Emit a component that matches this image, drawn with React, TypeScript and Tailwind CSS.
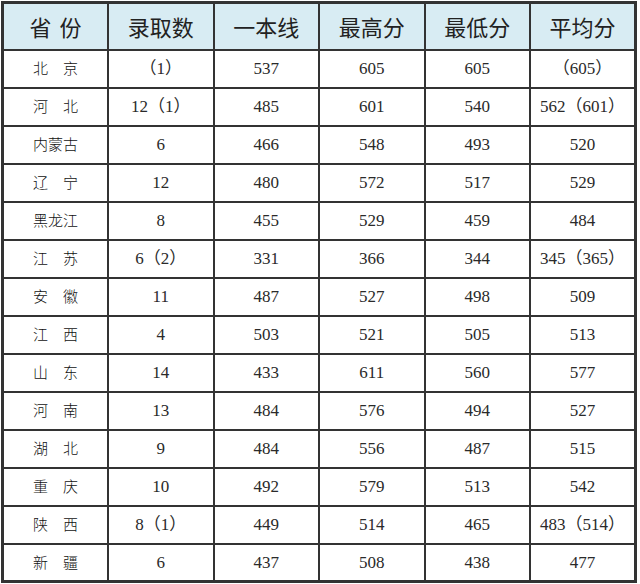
import React from "react";

const rows: [string, string, string, string, string, string][] = [
  ["北　京", "（1）", "537", "605", "605", "（605）"],
  ["河　北", "12（1）", "485", "601", "540", "562（601）"],
  ["内蒙古", "6", "466", "548", "493", "520"],
  ["辽　宁", "12", "480", "572", "517", "529"],
  ["黑龙江", "8", "455", "529", "459", "484"],
  ["江　苏", "6（2）", "331", "366", "344", "345（365）"],
  ["安　徽", "11", "487", "527", "498", "509"],
  ["江　西", "4", "503", "521", "505", "513"],
  ["山　东", "14", "433", "611", "560", "577"],
  ["河　南", "13", "484", "576", "494", "527"],
  ["湖　北", "9", "484", "556", "487", "515"],
  ["重　庆", "10", "492", "579", "513", "542"],
  ["陕　西", "8（1）", "449", "514", "465", "483（514）"],
  ["新　疆", "6", "437", "508", "438", "477"],
];

const headers = ["录取数", "一本线", "最高分", "最低分", "平均分"];

const thCls =
  "border-2 border-[#333] p-0 text-center align-middle text-[22px] font-normal text-[#222] font-['Noto_Sans_CJK_SC',sans-serif]";

export default function App() {
  return (
    <div className="w-[640px] h-[584px] bg-white pt-px pl-px">
      <table className="table-fixed border-collapse w-[636px] border-[3px] border-[#333]">
        <thead>
          <tr className="h-[47px] bg-[#d8ecf3]">
            <th className={thCls}>
              <span>省</span>
              <span className="ml-2">份</span>
            </th>
            {headers.map((h) => (
              <th key={h} className={thCls}>
                {h}
              </th>
            ))}
          </tr>
        </thead>
        <tbody>
          {rows.map((r, i) => (
            <tr key={i} className="h-[38px]">
              {r.map((c, j) => (
                <td
                  key={j}
                  className={
                    "border-2 border-[#333] p-0 text-center align-middle " +
                    (j === 0
                      ? "text-[15px] font-light text-[#111] font-['Noto_Sans_CJK_SC',serif]"
                      : "text-[17px] text-[#2a2a2a] font-['Liberation_Serif','Noto_Sans_CJK_SC',serif]")
                  }
                >
                  {c}
                </td>
              ))}
            </tr>
          ))}
        </tbody>
      </table>
    </div>
  );
}
